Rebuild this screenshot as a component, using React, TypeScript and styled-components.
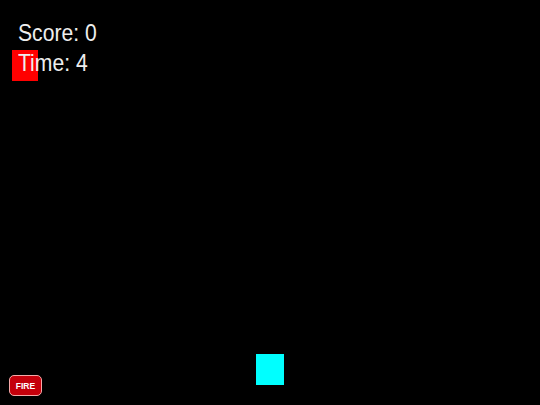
import React from "react";
import styled, { createGlobalStyle } from "styled-components";

const Global = createGlobalStyle`
  html, body { margin: 0; padding: 0; background: #000; }
  body { width: 540px; height: 405px; overflow: hidden; }
`;

const Stage = styled.div`
  position: relative;
  width: 540px;
  height: 405px;
  background: #000;
  overflow: hidden;
  font-family: "Liberation Sans", Arial, sans-serif;
`;

const Hud = styled.div`
  position: absolute;
  left: 18px;
  top: 18px;
  z-index: 2;
  display: flex;
  flex-direction: column;
  color: #eeeeee;
  font-size: 24px;
  line-height: 30px;
  transform: scaleX(0.88);
  transform-origin: left top;
`;

const Sprite = styled.div<{ $color: string; $x: number; $y: number; $w: number; $h: number }>`
  position: absolute;
  left: ${(p) => p.$x}px;
  top: ${(p) => p.$y}px;
  width: ${(p) => p.$w}px;
  height: ${(p) => p.$h}px;
  background: ${(p) => p.$color};
`;

const FireButton = styled.button`
  position: absolute;
  left: 9px;
  bottom: 9px;
  width: 33px;
  height: 21px;
  padding: 0;
  border: 1px solid #f5a8a8;
  border-radius: 5px;
  background: #c4000b;
  color: #fff;
  font-family: "Liberation Sans", Arial, sans-serif;
  font-weight: bold;
  font-size: 8.5px;
  display: flex;
  align-items: center;
  justify-content: center;
`;

export default function App() {
  return (
    <>
      <Global />
      <Stage>
        <Sprite $color="#ff0000" $x={12} $y={50} $w={26} $h={31} />
        <Sprite $color="#00ffff" $x={256} $y={354} $w={28} $h={31} />
        <Hud>
          <span>Score: 0</span>
          <span>Time: 4</span>
        </Hud>
        <FireButton>FIRE</FireButton>
      </Stage>
    </>
  );
}
